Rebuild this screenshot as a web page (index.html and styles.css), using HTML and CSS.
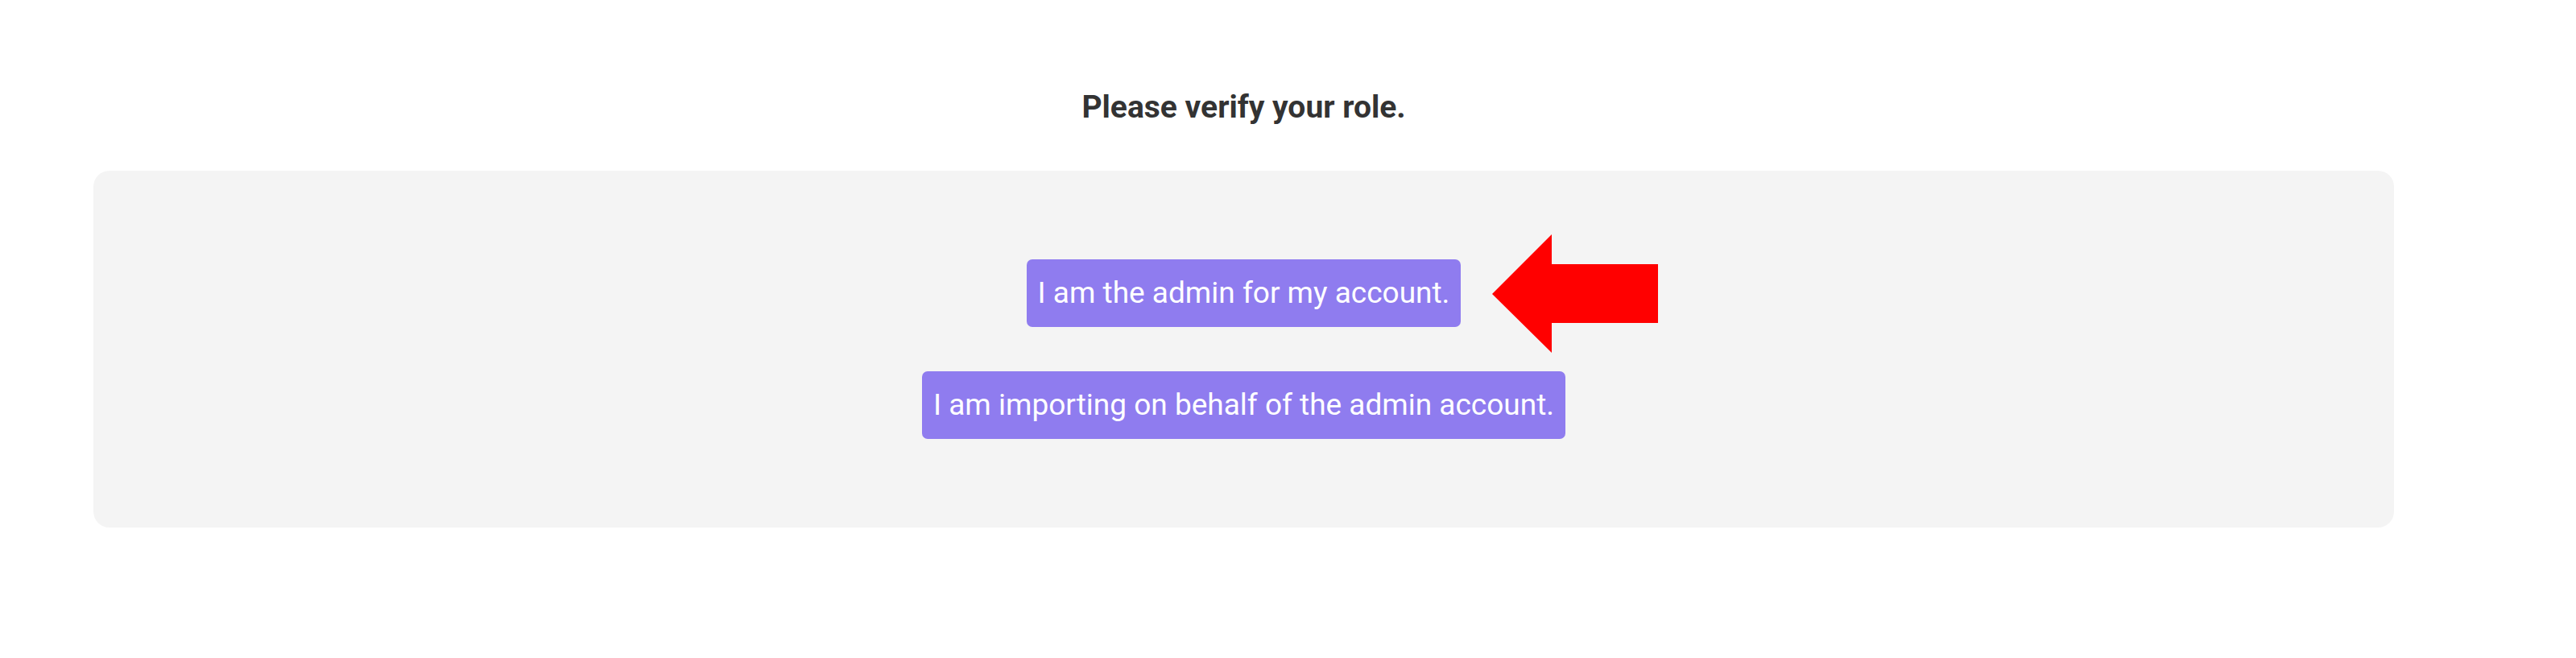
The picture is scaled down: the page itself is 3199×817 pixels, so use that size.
FILE: index.html
```html
<!DOCTYPE html>
<html>
<head>
<meta charset="utf-8">
<link rel="stylesheet" href="styles.css">
</head>
<body>
<div class="page">
  <h1 class="title">Please verify your role.</h1>
  <div class="panel">
    <div class="choice">
      <button class="role-btn">I am the admin for my account.</button>
      <svg class="arrow" width="206" height="147" viewBox="0 0 206 147">
        <path d="M0 74 L74 0 L74 37 L206 37 L206 110 L74 110 L74 147 Z" fill="#ff0000"/>
      </svg>
    </div>
    <div class="choice">
      <button class="role-btn">I am importing on behalf of the admin account.</button>
    </div>
  </div>
</div>
</body>
</html>
```

FILE: styles.css
```css
html, body {
  margin: 0;
  padding: 0;
  background: #ffffff;
}
.page {
  width: 2857px;
  margin-left: 116px;
  font-family: Roboto, "Liberation Sans", sans-serif;
}
.title {
  margin: 111px 0 57px 0;
  height: 44px;
  line-height: 44px;
  font-size: 39px;
  font-weight: 700;
  color: #333333;
  text-align: center;
}
.panel {
  background: #f4f4f4;
  border-radius: 20px;
  padding: 110px 0;
  display: flex;
  flex-direction: column;
  align-items: center;
  gap: 55px;
}
.choice {
  position: relative;
}
.role-btn {
  display: block;
  height: 84px;
  padding: 0 14px;
  border: none;
  border-radius: 7px;
  background: #8f7cef;
  color: #ffffff;
  font-family: Roboto, "Liberation Sans", sans-serif;
  font-size: 37px;
  line-height: 84px;
  white-space: nowrap;
}
.arrow {
  position: absolute;
  left: calc(100% + 39px);
  top: calc(50% - 73px);
}
```
